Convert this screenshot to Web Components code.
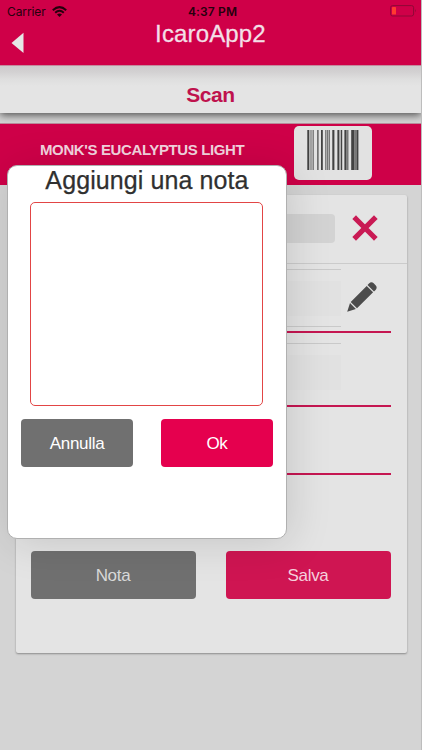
<!DOCTYPE html>
<html lang="it"><head><meta charset="utf-8"><title>IcaroApp2</title>
<style>html,body{margin:0;height:100%;overflow:hidden}body{font-family:"Liberation Sans",Arial,sans-serif;background:#d4d4d4}</style></head>
<body><icaro-app></icaro-app>
<script>
const define=(name,html)=>customElements.define(name,class extends HTMLElement{
  constructor(){super();this.attachShadow({mode:'open'}).innerHTML=html;}
});
define('status-bar',`<style>
:host{display:grid;grid-template-columns:1fr auto 1fr;align-items:center;height:22px;padding:0 3px 0 7px;box-sizing:border-box;font:12px Inter,sans-serif;color:#26000d}
.l{display:flex;align-items:center;gap:6px;letter-spacing:-.1px}b{font-weight:600;letter-spacing:.15px}.r{justify-self:end;margin:-1px 1px 0 0}svg{display:block}
</style><div class="l"><span>Carrier</span><svg width="15" height="11" viewBox="0 0 15 11"><g fill="none" stroke="#26000d" stroke-width="2"><path d="M.8 4.2Q7.5-2 14.2 4.2"/><path d="M3.2 6.8Q7.5 2.8 11.8 6.8"/></g><path d="M5 8.4Q7.5 6.5 10 8.4L7.5 11Z" fill="#26000d"/></svg></div>
<b>4:37 PM</b><svg class="r" width="27" height="12" viewBox="0 0 27 12"><rect x=".6" y=".6" width="23" height="10.4" rx="2" fill="none" stroke="#8f0836"/><rect x="2" y="2" width="4" height="7.6" rx=".6" fill="#ff3b30"/><path d="M25 4q1.6 1.8 0 3.6z" fill="#8f0836"/></svg>`);
define('app-header',`<style>
:host{display:block;position:relative;z-index:1;height:65px;background:#cf0048;color:#f3dfe6;border-bottom:1px solid #c48b9d}
.n{display:grid;grid-template-columns:40px 1fr 40px;height:43px}
.n svg{margin:10px 0 0 11px}.t{text-align:center;font-size:24px;line-height:24px;-webkit-text-stroke:.3px #f3dfe6;letter-spacing:.15px}
</style><status-bar></status-bar><div class="n"><svg width="14" height="22" viewBox="0 0 14 22"><path d="M12.5.7V21L.5 11Z" fill="#e6e6e6"/></svg><div class="t"><slot></slot></div></div>`);
define('page-title',`<style>
:host{display:flex;height:47px;box-sizing:border-box;padding-top:12px;justify-content:center;color:#bf124d;font:bold 21px/34px "Liberation Sans",Arial,sans-serif;letter-spacing:-.45px;background:linear-gradient(#cecccd,#d3d1d2 6px,#dedede 13px,#e4e4e4 20px,#e4e4e4);box-shadow:0 2px 8px rgba(0,0,0,.65)}
</style><slot></slot>`);
define('bar-code',`<style>
:host{display:flex;justify-content:center;width:78px;height:54px;box-sizing:border-box;padding-top:4px;border-radius:5px;background:#e2e2e2}
</style><svg width="52" height="41" viewBox="0 0 52 41"><g fill="#424242"><path d="M.3 0h2v40H.3zM10.3 0h1.2v40h-1.2zM14 0h1.8v40H14zM25.3 0h2.1v40h-2.1zM30.4 0h2v40h-2zM33.7 0h1.5v40h-1.5zM37.4 0h2.2v40h-2.2zM44.2 0h3.4v40h-3.4zM50 0h1.4v40H50z"/></g><path d="M3.4 0h1.2v40H3.4zM5.5 0h1.4v40H5.5zM18.1 0h1.4v40h-1.4zM20 0h1.2v40H20zM21.7 0h1.3v40h-1.3zM40 0h1.5v40H40zM47.8 0h2.2v40h-2.2z" fill="#777"/></svg>`);
define('product-banner',`<style>
:host{display:flex;position:relative;height:61px;box-sizing:border-box;margin-top:11px;padding:2px 49px 0 40px;background:#ce0048;justify-content:space-between;color:#f2d3de;box-shadow:0 -1px 0 #b88b9a}
span{font-size:15px;font-weight:bold;line-height:17px;margin-top:15px;white-space:nowrap;letter-spacing:-.38px}
</style><span><slot></slot></span><bar-code></bar-code>`);
define('action-button',`<style>
:host{display:flex;align-items:center;justify-content:center;height:48px;border-radius:4px;box-sizing:border-box;padding-top:2px;font-size:17px;letter-spacing:-.3px;background:var(--fill);color:var(--ink,#fff)}
</style><slot></slot>`);
define('field-row',`<style>
:host{display:block;box-sizing:border-box;height:var(--h,73px);margin:0 16px;border-bottom:2px solid #c51651}
.w{display:grid;grid-template-columns:1fr 50px;height:100%}.i{box-sizing:border-box;height:58px;border-top:1px solid #c9c9c9;border-bottom:1px solid #c9c9c9;padding:11px 0}
.i:before{content:"";display:block;height:35px;background:#e1e1e1}
:host([plain]) .i{visibility:hidden}:host([open]) .i{border-bottom:0}
</style><div class="w"><div class="i"></div><slot></slot></div>`);
define('detail-card',`<style>
:host{display:block;box-sizing:border-box;width:391px;height:458px;margin:10px 0 0 15.5px;background:#e4e4e4;border-radius:2px;box-shadow:0 1px 2px rgba(0,0,0,.35)}
.top{height:68px;display:grid;grid-template-columns:1fr 72px;border-bottom:1px solid #cbcbcb;padding-left:16px}
.name{height:29px;margin-top:19px;background:#d3d3d3;border-radius:4px}
.x{margin:20px 0 0 17px}.pencil{margin:13px 0 0 6.5px}
.f1{--h:64px;margin-top:5px}.f2{--h:64px;margin-top:10px}.f3{--h:68px}
.b{display:grid;grid-template-columns:165px 165px;justify-content:space-between;margin:76px 16px 0 15px}
</style><div class="top"><div class="name"></div><svg class="x" width="26" height="26" viewBox="0 0 26 26"><path d="M4 4L22 22M22 4L4 22" stroke="#c91a54" stroke-width="5.2" stroke-linecap="square" fill="none"/></svg></div>
<field-row class="f1"><svg class="pencil" width="30" height="30" viewBox="0 0 30 30" fill="#4c4c4c"><path d="M22 1.4Q24.4-.6 26.7 1.2L28.8 3.4Q30.6 5.7 28.6 7.9L27 9.4 20.5 3ZM19.7 3.9L26.1 10.3 10 26.2 3.7 19.9ZM3 21L8.9 26.9.2 29.7Z"/></svg></field-row>
<field-row class="f2" open></field-row><field-row class="f3" plain></field-row>
<div class="b"><action-button style="--fill:#707070;--ink:#d9d9d9">Nota</action-button><action-button style="--fill:#cf1552;--ink:#f5cfdb">Salva</action-button></div>`);
define('note-dialog',`<style>
:host{display:block;position:absolute;left:7px;top:165px;width:280px;height:374px;box-sizing:border-box;background:#fff;border:1px solid #b0b0b0;border-radius:10px;box-shadow:4px 4px 42px rgba(0,0,0,.13)}
h2{font-weight:400;font-size:25px;line-height:28px;margin:0;text-align:center;color:#303030;-webkit-text-stroke:.25px #303030;letter-spacing:.1px}
textarea{display:block;width:233px;height:204px;box-sizing:border-box;margin:8px 0 0 22px;border:1px solid #e24545;border-radius:5px;resize:none;background:#fff;outline:0}
.b{display:grid;grid-template-columns:112px 112px;gap:28px;margin:13px 0 0 13px}
</style><h2>Aggiungi una nota</h2><textarea aria-label="Nota"></textarea><div class="b"><action-button style="--fill:#707070">Annulla</action-button><action-button style="--fill:#e5004e">Ok</action-button></div>`);
define('icaro-app',`<style>
:host{display:block;position:relative;width:422px;height:750px;box-sizing:border-box;overflow:hidden;border-right:1px solid #bdbdbd;background:#d4d4d4}
</style><app-header>IcaroApp2</app-header><page-title>Scan</page-title><product-banner>MONK'S EUCALYPTUS LIGHT</product-banner><detail-card></detail-card><note-dialog></note-dialog>`);
</script></body></html>
